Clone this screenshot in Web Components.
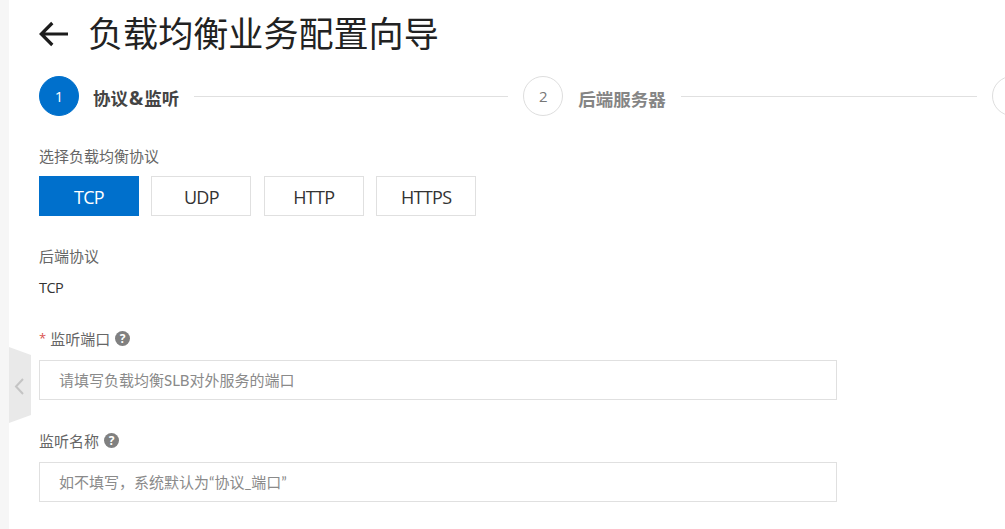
<!DOCTYPE html>
<html lang="zh">
<head>
<meta charset="utf-8">
<title>负载均衡业务配置向导</title>
<style>
  html, body { margin: 0; height: 100%; overflow: hidden; background: #fff; }
  body { font-family: "Noto Sans CJK SC", "Open Sans", sans-serif; color: #333; }
  .amp { font-family: "Open Sans", sans-serif; font-size: 19px; padding: 0 1px; }
</style>
</head>
<body>
<wizard-page>
  <page-title>负载均衡业务配置向导</page-title>
  <wizard-steps>
    <wizard-step num="1" active line="314">协议<span class="amp">&amp;</span>监听</wizard-step>
    <wizard-step num="2" line="296" style="--gap:15px">后端服务器</wizard-step>
    <wizard-step num=""></wizard-step>
  </wizard-steps>
  <proto-picker label="选择负载均衡协议">
    <proto-btn active>TCP</proto-btn>
    <proto-btn>UDP</proto-btn>
    <proto-btn>HTTP</proto-btn>
    <proto-btn>HTTPS</proto-btn>
  </proto-picker>
  <static-field label="后端协议">TCP</static-field>
  <text-field label="监听端口" required help style="--top:29px">请填写负载均衡SLB对外服务的端口</text-field>
  <text-field label="监听名称" help style="--top:29px">如不填写，系统默认为“协议_端口”</text-field>
</wizard-page>

<script>
class WizardPage extends HTMLElement {
    constructor() {
        super();
        this.attachShadow({ mode: "open" }).innerHTML = `
        <style>
            :host { display: flex; height: 529px; position: relative; overflow: hidden; }
            .strip { flex: 0 0 9px; background: #f6f6f6; }
            .main { flex: 1; min-width: 0; padding-left: 30px; display: flex; flex-direction: column; }
            .toggle { position: absolute; left: 9px; top: 347px; }
        </style>
        <div class="strip"></div>
        <div class="main"><slot></slot></div>
        <svg class="toggle" width="22" height="77" viewBox="0 0 22 77">
            <path d="M0 0L22 8V68L0 76Z" fill="#e9e9e9"/>
            <path d="M14 32L7 39.5L14 47" fill="none" stroke="#c4c4c4" stroke-width="2"/>
        </svg>`;
    }
}

class PageTitle extends HTMLElement {
    constructor() {
        super();
        this.attachShadow({ mode: "open" }).innerHTML = `
        <style>
            :host { display: flex; align-items: center; height: 64px; color: #222; }
            svg { flex: none; margin: 3px 19px 0 0; }
            .text { font-size: 35.1px; line-height: 64px; white-space: nowrap; }
        </style>
        <svg width="30" height="26" viewBox="0 0 30 26">
            <path d="M29 13H2.3M13.3 2L2.3 13L13.3 24" fill="none" stroke="#1c1c1c" stroke-width="3.2"/>
        </svg>
        <span class="text"><slot></slot></span>`;
    }
}

class WizardSteps extends HTMLElement {
    constructor() {
        super();
        this.attachShadow({ mode: "open" }).innerHTML = `
        <style>
            :host { display: flex; margin-top: 12px; width: 1100px; }
        </style>
        <slot></slot>`;
    }
}

class WizardStep extends HTMLElement {
    constructor() {
        super();
        const active = this.hasAttribute("active");
        const line = this.getAttribute("line");
        this.attachShadow({ mode: "open" }).innerHTML = `
        <style>
            :host { display: flex; align-items: center; height: 40px; flex: none; }
            .dot { width: 40px; height: 40px; box-sizing: border-box; border-radius: 50%; display: flex;
                   align-items: center; justify-content: center; font-size: 15px; font-family: "Open Sans", sans-serif;
                   border: 1px solid ${active ? "#0070cc" : "#dedede"};
                   background: ${active ? "#0070cc" : "#fff"};
                   color: ${active ? "#fff" : "#777"}; }
            .label { margin-left: var(--gap, 14px); font-size: 17.5px; font-weight: 700; white-space: nowrap; position: relative; top: 2px;
                     color: ${active ? "#444" : "#858585"}; }
            .line { height: 1px; background: #e0e0e0; margin: 0 15px 0 15px; width: ${line}px; }
        </style>
        <div class="dot">${this.getAttribute("num")}</div>
        ${line ? `<span class="label"><slot></slot></span><div class="line"></div>` : ""}`;
    }
}

class ProtoPicker extends HTMLElement {
    constructor() {
        super();
        this.attachShadow({ mode: "open" }).innerHTML = `
        <style>
            :host { display: block; margin-top: 29px; }
            .label { font-size: 15px; line-height: 22px; color: #666; white-space: nowrap; }
            .row { display: flex; gap: 12.4px; margin-top: 9px; }
        </style>
        <div class="label">${this.getAttribute("label")}</div>
        <div class="row"><slot></slot></div>`;
    }
}

class ProtoBtn extends HTMLElement {
    constructor() {
        super();
        const active = this.hasAttribute("active");
        this.attachShadow({ mode: "open" }).innerHTML = `
        <style>
            :host { display: flex; width: 100px; height: 40px; box-sizing: border-box; padding-top: 2px; align-items: center; justify-content: center;
                    font-family: "Open Sans", sans-serif; font-size: 18px; letter-spacing: -0.7px;
                    border: 1px solid ${active ? "#0070cc" : "#e0e0e0"};
                    background: ${active ? "#0070cc" : "#fff"};
                    color: ${active ? "#fff" : "#333"}; }
        </style>
        <slot></slot>`;
    }
}

class StaticField extends HTMLElement {
    constructor() {
        super();
        this.attachShadow({ mode: "open" }).innerHTML = `
        <style>
            :host { display: block; margin-top: 29px; }
            .label { font-size: 15px; line-height: 22px; color: #666; }
            .value { font-family: "Open Sans", sans-serif; font-size: 14.5px; line-height: 22px; margin-top: 9px; padding-top: 1px; height: 21px; color: #333; letter-spacing: -0.6px; }
        </style>
        <div class="label">${this.getAttribute("label")}</div>
        <div class="value"><slot></slot></div>`;
    }
}

class HelpIcon extends HTMLElement {
    constructor() {
        super();
        this.attachShadow({ mode: "open" }).innerHTML = `
        <style>
            :host { display: inline-flex; width: 15px; height: 15px; border-radius: 50%; background: #808080; color: #fff;
                    align-items: center; justify-content: center; font: 700 12px/15px "Open Sans", sans-serif; }
        </style>?`;
    }
}
 
class TextField extends HTMLElement {
    constructor() {
        super();
        const required = this.hasAttribute("required");
        const help = this.hasAttribute("help");
        this.attachShadow({ mode: "open" }).innerHTML = `
        <style>
            :host { display: block; margin-top: var(--top, 30px); }
            .label { display: flex; align-items: center; height: 22px; font-size: 15px; color: #666; white-space: nowrap; }
            .star { color: #d9534f; margin-right: 4px; font-family: "Open Sans", sans-serif; font-size: 13px; }
            help-icon { margin-left: 5px; }
            .box { width: 798px; height: 40px; box-sizing: border-box; margin-top: 11px; padding: 0 0 2px 19px;
                   border: 1px solid #e0e0e0; display: flex; align-items: center;
                   font-family: Lato, "Noto Sans CJK SC", sans-serif;
                   font-size: 15px; color: #8a8a8a; white-space: nowrap; }
        </style>
        <div class="label">${required ? `<span class="star">*</span>` : ""}${this.getAttribute("label")}${help ? "<help-icon></help-icon>" : ""}</div>
        <div class="box"><slot></slot></div>`;
    }
}

customElements.define("help-icon", HelpIcon);
customElements.define("wizard-page", WizardPage);
customElements.define("page-title", PageTitle);
customElements.define("wizard-steps", WizardSteps);
customElements.define("wizard-step", WizardStep);
customElements.define("proto-picker", ProtoPicker);
customElements.define("proto-btn", ProtoBtn);
customElements.define("static-field", StaticField);
customElements.define("text-field", TextField);
</script>
</body>
</html>
